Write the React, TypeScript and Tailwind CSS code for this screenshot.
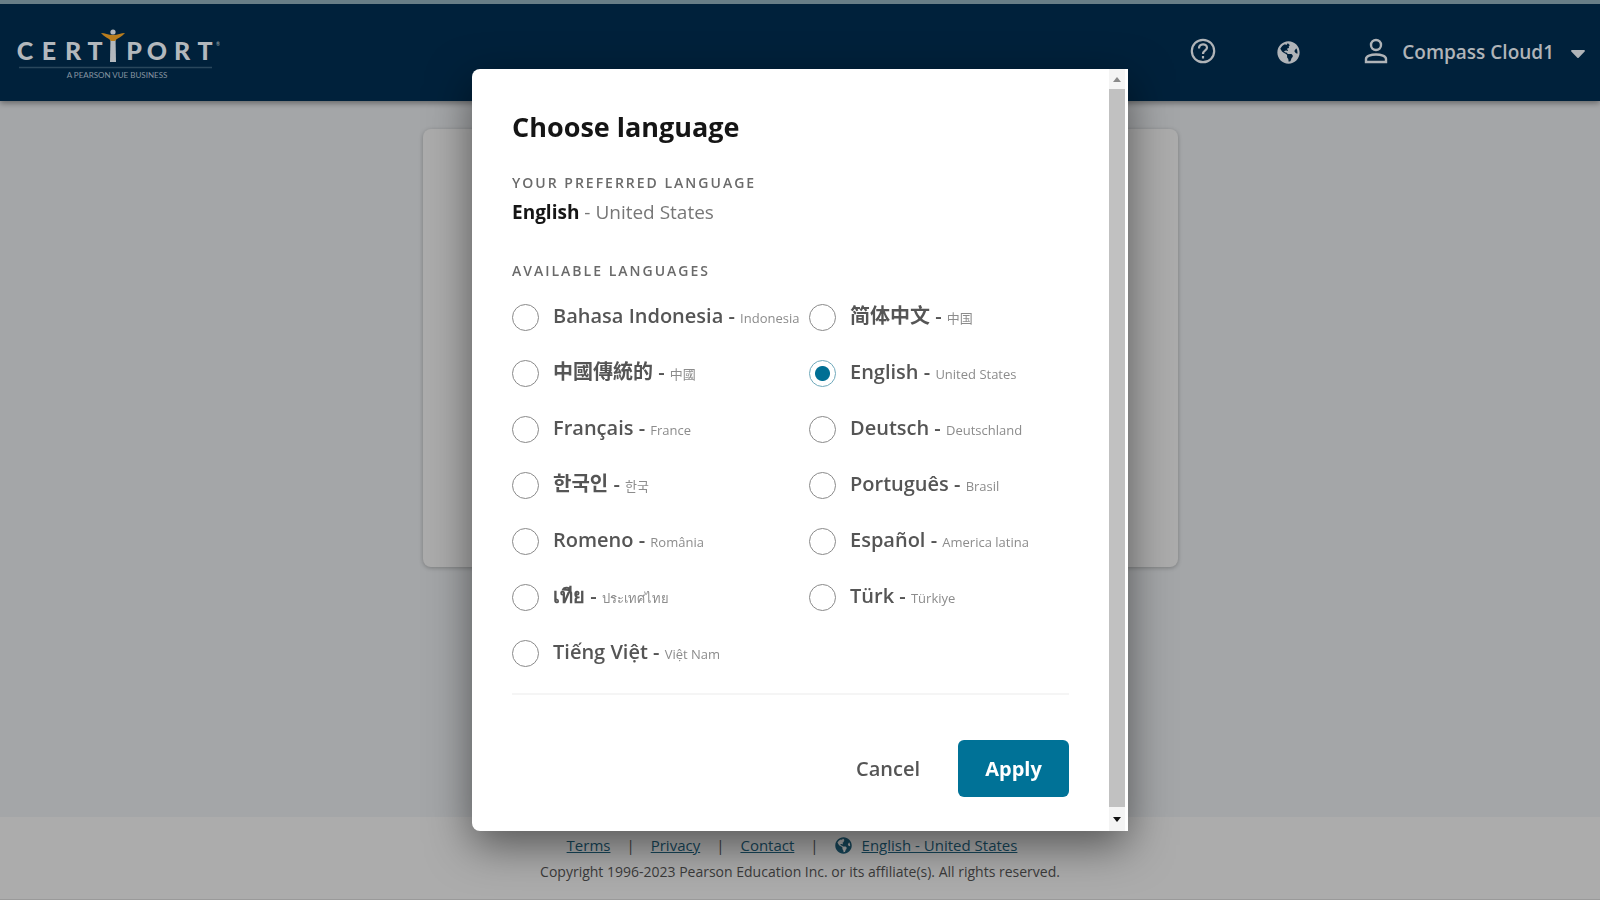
import { useState } from "react";
import { FaCaretDown, FaGlobeAmericas } from "react-icons/fa";

type Language = { id: string; name: string; region: string; lang: string };

const languages: Language[] = [
  { id: "id", name: "Bahasa Indonesia", region: "Indonesia", lang: "id" },
  { id: "zh-cn", name: "简体中文", region: "中国", lang: "zh-CN" },
  { id: "zh-tw", name: "中國傳統的", region: "中國", lang: "zh-TW" },
  { id: "en", name: "English", region: "United States", lang: "en" },
  { id: "fr", name: "Français", region: "France", lang: "fr" },
  { id: "de", name: "Deutsch", region: "Deutschland", lang: "de" },
  { id: "ko", name: "한국인", region: "한국", lang: "ko" },
  { id: "pt", name: "Português", region: "Brasil", lang: "pt" },
  { id: "ro", name: "Romeno", region: "România", lang: "ro" },
  { id: "es", name: "Español", region: "America latina", lang: "es" },
  { id: "th", name: "เทีย", region: "ประเทศไทย", lang: "th" },
  { id: "tr", name: "Türk", region: "Türkiye", lang: "tr" },
  { id: "vi", name: "Tiếng Việt", region: "Việt Nam", lang: "vi" },
];

function Logo() {
  return (
    <a href="#" aria-label="Certiport" className="block">
      <svg width="204" height="54" viewBox="0 -1 204 54" fill="#b3b8bd" fontFamily="Lato, sans-serif">
        <g fontSize="25" fontWeight="900" textAnchor="middle">
          <text x="9" y="33">C</text>
          <text x="33" y="33">E</text>
          <text x="57" y="33">R</text>
          <text x="79" y="33">T</text>
          <text x="118" y="33">P</text>
          <text x="141" y="33">O</text>
          <text x="166" y="33">R</text>
          <text x="189" y="33">T</text>
        </g>
        <text x="200" y="19" fontSize="5">®</text>
        <path d="M94.500 9h5L100 35h-6z" />
        <circle cx="97" cy="5" r="2.600" />
        <path d="M85 6 C89 6 92 8 97 8 C102 8 105 6 109 6 C106 10 101 11 99 14 H95 C93 11 88 10 85 6Z" fill="#b97d1d" />
        <path d="M3 40.500H196" stroke="#29475c" strokeWidth="1.500" />
        <text x="101" y="51" fontSize="8" textAnchor="middle" fill="#8795a1">A PEARSON VUE BUSINESS</text>
      </svg>
    </a>
  );
}

function Header() {
  return (
    <header className="flex h-[101px] items-center border-t-4 border-[#687e87] bg-[#00213b] pr-[10px] pl-4 text-[#b0b4b8] shadow-[0_2px_6px_rgba(0,0,0,0.4)]">
      <Logo />
      <nav className="ml-auto flex items-center">
        <button type="button" aria-label="Help" className="mr-[61px] pb-1">
          <svg width="26" height="26" viewBox="0 0 26 26" fill="none" stroke="currentColor" strokeWidth="2.200">
            <circle cx="13" cy="13" r="11.200" />
            <path d="M9 10.500C9 5 17 5 17 9.800C17 12.500 13 12.500 13 16" />
            <path d="M13 18V20.500" />
          </svg>
        </button>
        <button type="button" aria-label="Language" className="mr-[64px]">
          <FaGlobeAmericas size={23} />
        </button>
        <button type="button" className="flex items-center">
          <svg width="24" height="26" viewBox="0 0 24 26" fill="none" stroke="currentColor" strokeWidth="2.400" className="mr-[14px] mb-1">
            <circle cx="12" cy="7" r="5" />
            <path d="M2 24V21C2 18 7 16.500 12 16.500S22 18 22 21V24Z" />
          </svg>
          <span className="mr-3 text-[19px] font-semibold">Compass Cloud1</span>
          <FaCaretDown size={24} />
        </button>
      </nav>
    </header>
  );
}

function Footer() {
  const link = "text-[#17465a] underline";
  return (
    <footer className="border-b border-[#9a9a9a] bg-[#acacac] pt-4 pb-[15px] text-[#3b3b3b]">
      <div className="flex h-6 items-center justify-center gap-4 pr-4 text-[15px]">
        <a href="#" className={link}>Terms</a>
        <span>|</span>
        <a href="#" className={link}>Privacy</a>
        <span>|</span>
        <a href="#" className={link}>Contact</a>
        <span>|</span>
        <a href="#" className="flex items-center gap-[10px] text-[#17465a]">
          <FaGlobeAmericas size={17} />
          <span className="underline">English - United States</span>
        </a>
      </div>
      <p className="mt-[3px] text-center text-sm leading-6">
        Copyright 1996-2023 Pearson Education Inc. or its affiliate(s). All rights reserved.
      </p>
    </footer>
  );
}

function LanguageOption({ item, checked, onSelect }: { item: Language; checked: boolean; onSelect: () => void }) {
  return (
    <div className="flex h-14 items-center">
      <input
        id={item.id}
        type="radio"
        name="language"
        checked={checked}
        onChange={onSelect}
        className="size-[27px] shrink-0 appearance-none rounded-full border border-[#8a8a8a] bg-white checked:border-[#6fa9bb] checked:bg-[radial-gradient(circle,#006f94_0_7px,#ffffff_8px)]"
      />
      <label htmlFor={item.id} lang={item.lang} className="pb-[2px] pl-[14px] text-xl whitespace-nowrap text-[#555]">
        <span className="font-semibold">{item.name} -</span>{" "}
        <span className="text-[13px] text-[#8c8c8c]">{item.region}</span>
      </label>
    </div>
  );
}

function LanguageDialog() {
  const [selected, setSelected] = useState("en");
  return (
    <div className="fixed inset-0 flex items-center justify-center">
      <section
        role="dialog"
        aria-modal="true"
        aria-labelledby="dialog-title"
        className="flex w-full max-w-[656px] overflow-hidden rounded-l-lg bg-white pr-[3px] shadow-[0_14px_44px_rgba(0,0,0,0.5)]"
      >
        <form className="min-w-0 flex-1 px-10 pt-[38px] pb-[34px]" onSubmit={(e) => e.preventDefault()}>
          <h1 id="dialog-title" className="text-[27px] leading-10 font-bold text-[#151515]">Choose language</h1>
          <h2 className="mt-[26px] text-sm leading-5 font-semibold tracking-[2px] text-[#6a6a6a] uppercase">
            Your preferred language
          </h2>
          <p className="mt-[3px] text-[19px] leading-8 text-[#777]">
            <strong className="font-bold text-[#151515]">English</strong> - United States
          </p>
          <fieldset className="mt-[33px]">
            <legend className="text-sm leading-5 font-semibold tracking-[2px] text-[#6a6a6a] uppercase">
              Available languages
            </legend>
            <div className="mt-2 grid grid-cols-[297px_1fr]">
              {languages.map((item) => (
                <LanguageOption
                  key={item.id}
                  item={item}
                  checked={selected === item.id}
                  onSelect={() => setSelected(item.id)}
                />
              ))}
            </div>
          </fieldset>
          <hr className="mt-3 border-t-2 border-[#f5f5f5]" />
          <div className="mt-[45px] flex items-center justify-end gap-[38px]">
            <button type="button" className="text-xl font-semibold text-[#555]">Cancel</button>
            <button type="submit" className="h-[57px] w-[111px] rounded-md bg-[#007297] text-xl font-bold text-white">
              Apply
            </button>
          </div>
        </form>
        <div aria-hidden="true" className="flex w-4 flex-col items-center bg-[#f4f4f4]">
          <div className="flex h-5 items-center">
            <svg width="8" height="5" viewBox="0 0 8 5" fill="#8a8a8a"><path d="M0 5 4 0l4 5z" /></svg>
          </div>
          <div className="w-full flex-1 bg-[#c1c1c1]" />
          <div className="flex h-6 items-center">
            <svg width="8" height="5" viewBox="0 0 8 5" fill="#111"><path d="M0 0h8L4 5z" /></svg>
          </div>
        </div>
      </section>
    </div>
  );
}

export default function App() {
  return (
    <div className="flex min-h-screen flex-col bg-[#a4a6a8] font-['Open_Sans','Noto_Sans','Noto_Sans_CJK_SC',sans-serif]">
      <Header />
      <main className="flex-1 px-6 pt-7">
        <div className="mx-auto h-[438px] w-full max-w-[755px] rounded-lg bg-[#acacac] shadow-[0_1px_4px_rgba(0,0,0,0.25)]" />
      </main>
      <Footer />
      <LanguageDialog />
    </div>
  );
}
